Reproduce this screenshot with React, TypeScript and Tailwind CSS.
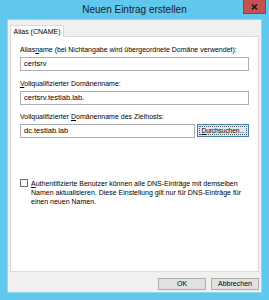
import React from "react"

const font = { fontFamily: '"Liberation Sans", Arial, sans-serif' }

function Label({ children }: { children: React.ReactNode }) {
  return <div className="h-[9px] text-[7px] leading-[9px] text-black whitespace-nowrap">{children}</div>
}

function TextBox({ value, className = "" }: { value: string; className?: string }) {
  return (
    <div className={`h-[14px] border border-[#abadb3] bg-white pl-[3px] text-[7.5px] leading-[12px] text-black ${className}`}>
      {value}
    </div>
  )
}

export default function App() {
  return (
    <div className="flex h-[300px] w-[269px] flex-col bg-[#60c8ec]" style={font}>
      {/* Title bar */}
      <div className="relative flex h-[19px] items-center justify-center">
        <span className="text-[10px] text-[#1a1a1a]">Neuen Eintrag erstellen</span>
        <div className="absolute right-[3px] top-0 flex h-[14px] w-[23px] items-center justify-center border border-[#9e3a3a] border-t-0 bg-[#c75050]">
          <svg width="7" height="6" viewBox="0 0 7 6">
            <path d="M1 0.5 L6 5.5 M6 0.5 L1 5.5" stroke="#1a1a1a" strokeWidth="1.6" />
          </svg>
        </div>
      </div>

      {/* Body */}
      <div className="ml-[7px] mr-[7px] flex h-[274px] flex-col border border-[#8fd6f0] bg-[#f0f0f0] px-[1px]">
        {/* Tabs */}
        <div className="mt-[5px] flex">
          <div className="relative z-10 ml-[1px] -mb-[1px] h-[12px] w-[54px] border border-b-0 border-[#d9d9d9] bg-white text-center text-[7px] leading-[11px] text-black">
            Alias (CNAME)
          </div>
        </div>
        <div className="mx-[1px] flex h-[236px] flex-col border border-[#d9d9d9] bg-white px-[9px] pt-[8px]">
          <Label>
            Alias<span className="underline">n</span>ame (bei Nichtangabe wird übergeordnete Domäne verwendet):
          </Label>
          <TextBox value="certsrv" className="mt-[3px]" />
          <div className="mt-[8px]">
            <Label>
              <span className="underline">V</span>ollqualifizierter Domänenname:
            </Label>
          </div>
          <TextBox value="certsrv.testlab.lab." className="mt-[3px]" />
          <div className="mt-[7px]">
            <Label>
              Vollqualifizierter <span className="underline">D</span>omänenname des Zielhosts:
            </Label>
          </div>
          <div className="mt-[3px] flex h-[13px] gap-[2px]">
            <TextBox value="dc.testlab.lab" className="h-[13px] flex-1 leading-[11px]" />
            <div className="flex h-[13px] w-[52px] items-center justify-center border border-[#3c7fb1] bg-[#e3e8ee] p-[1px]">
              <div className="flex h-full w-full items-center justify-center border border-dotted border-[#555] text-[6.6px] tracking-[-0.1px] text-black">
                <span className="underline">D</span>urchsuchen...
              </div>
            </div>
          </div>
          <div className="mt-[42px] flex gap-[3px]">
            <div className="h-[8px] w-[8px] shrink-0 border border-[#707070] bg-white" />
            <div className="w-[221px] text-[7px] leading-[9px] text-black first-letter:underline">
              Authentifizierte Benutzer können alle DNS-Einträge mit demselben Namen aktualisieren. Diese Einstellung gilt nur für DNS-Einträge für einen neuen Namen.
            </div>
          </div>
        </div>

        {/* Buttons */}
        <div className="mt-[6px] flex justify-end gap-[5px] pr-[1px]">
          <div className="flex h-[12px] w-[48px] items-center justify-center border border-[#adadad] bg-[#e1e1e1] text-[7px] text-black">
            OK
          </div>
          <div className="flex h-[12px] w-[48px] items-center justify-center border border-[#adadad] bg-[#e1e1e1] text-[7px] text-black">
            Abbrechen
          </div>
        </div>
      </div>
    </div>
  )
}
